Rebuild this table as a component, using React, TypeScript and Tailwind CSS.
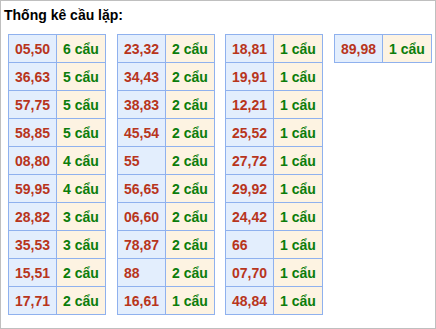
type Row = [string, number];

const groups: Row[][] = [
  [
    ['05,50', 6],
    ['36,63', 5],
    ['57,75', 5],
    ['58,85', 5],
    ['08,80', 4],
    ['59,95', 4],
    ['28,82', 3],
    ['35,53', 3],
    ['15,51', 2],
    ['17,71', 2],
  ],
  [
    ['23,32', 2],
    ['34,43', 2],
    ['38,83', 2],
    ['45,54', 2],
    ['55', 2],
    ['56,65', 2],
    ['06,60', 2],
    ['78,87', 2],
    ['88', 2],
    ['16,61', 1],
  ],
  [
    ['18,81', 1],
    ['19,91', 1],
    ['12,21', 1],
    ['25,52', 1],
    ['27,72', 1],
    ['29,92', 1],
    ['24,42', 1],
    ['66', 1],
    ['07,70', 1],
    ['48,84', 1],
  ],
  [['89,98', 1]],
];

// spacing between the four tables is not perfectly even in the original
const offsets = ['ml-0', 'ml-[11px]', 'ml-[10px]', 'ml-[11px]'];

function CauTable({ rows, className }: { rows: Row[]; className: string }) {
  return (
    <table className={`border-collapse self-start ${className}`}>
      <tbody>
        {rows.map(([pair, count]) => (
          <tr key={pair} className="h-[28px]">
            <td className="w-[48px] border border-[#8fb1ee] bg-[#e3eefd] pl-[6px] p-0 text-[#b8351c]">
              {pair}
            </td>
            <td className="w-[49px] border border-[#8fb1ee] bg-[#fdf3e2] pl-[6px] p-0 text-[#0b7d0b]">
              {count} cẩu
            </td>
          </tr>
        ))}
      </tbody>
    </table>
  );
}

export default function App() {
  return (
    <div
      className="w-[436px] h-[329px] border border-[#bfbfbf] bg-white text-[14px] font-bold leading-4"
      style={{ fontFamily: '"Liberation Sans", Arial, sans-serif' }}
    >
      <div className="pl-[3px] pt-[6px] text-black">Thống kê cầu lặp:</div>
      <div className="flex pl-[7px] pt-[11px]">
        {groups.map((rows, i) => (
          <CauTable key={i} rows={rows} className={offsets[i]} />
        ))}
      </div>
    </div>
  );
}
